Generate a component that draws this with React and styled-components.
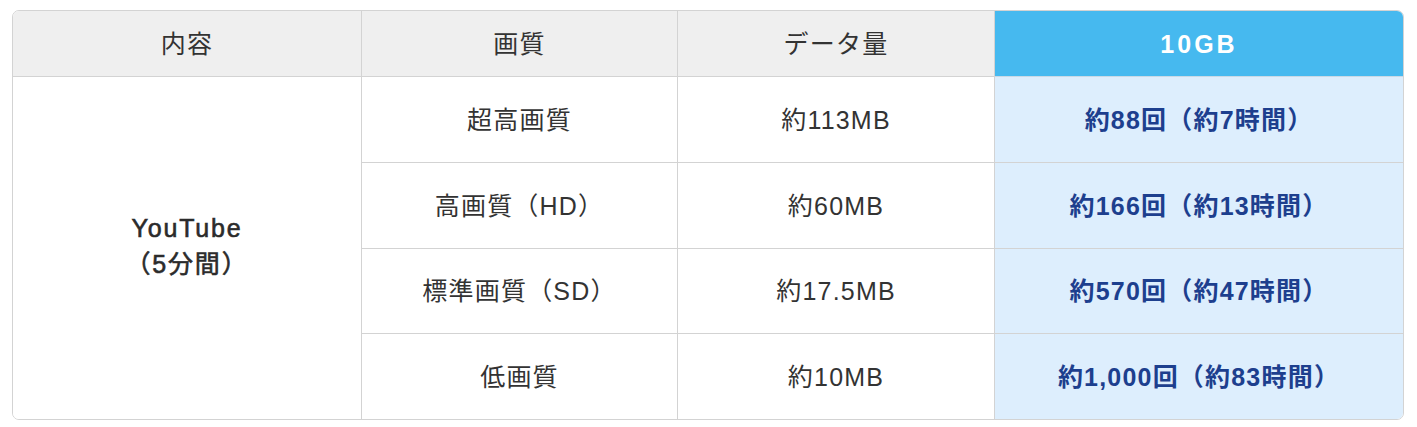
import React from "react";
import styled, { createGlobalStyle, css } from "styled-components";

const Global = createGlobalStyle`
  html, body { margin: 0; padding: 0; background: #ffffff; }
  body {
    font-family: "Liberation Sans", "Noto Sans CJK JP", sans-serif;
    color: #333333;
  }
`;

const Page = styled.div`
  padding: 10px 0 0 12px;
`;

const Table = styled.div`
  width: 1392px;
  box-sizing: border-box;
  border: 1px solid #d3d3d3;
  border-radius: 7px;
  overflow: hidden;
  display: grid;
  grid-template-columns: 349px 316px 317px 1fr;
  grid-template-rows: 66px 86px 86px 85px 85px;
`;

const variants = {
  head: css`
    background: #efefef;
    color: #333333;
    font-weight: 400;
  `,
  headAccent: css`
    background: #46b9ef;
    color: #ffffff;
    font-weight: 700;
    letter-spacing: 3px;
    border-bottom-color: #c9d9e6;
  `,
  body: css`
    background: #ffffff;
    color: #333333;
    font-weight: 400;
  `,
  label: css`
    background: #ffffff;
    color: #2b2b2b;
    font-weight: 400;
    -webkit-text-stroke: 0.6px #2b2b2b;
    letter-spacing: 1.8px;
    line-height: 36px;
    padding-bottom: 5px;
  `,
  accent: css`
    background: #ddeefd;
    color: #1d3f8e;
    font-weight: 700;
  `,
};

const Cell = styled.div`
  box-sizing: border-box;
  display: flex;
  flex-direction: column;
  align-items: center;
  justify-content: center;
  text-align: center;
  font-size: 25px;
  line-height: 34px;
  letter-spacing: 1.2px;
  border-right: ${(p) => (p.$lastCol ? "none" : "1px solid #d3d3d3")};
  border-bottom: ${(p) => (p.$lastRow ? "none" : "1px solid #d3d3d3")};
  ${(p) => p.$span && `grid-row: span ${p.$span};`}
  ${(p) => variants[p.$variant]}
`;

const Line = styled.span`
  display: block;
`;

const rows = [
  { quality: "超高画質", data: "約113MB", count: "約88回（約7時間）" },
  { quality: "高画質（HD）", data: "約60MB", count: "約166回（約13時間）" },
  { quality: "標準画質（SD）", data: "約17.5MB", count: "約570回（約47時間）" },
  { quality: "低画質", data: "約10MB", count: "約1,000回（約83時間）" },
];

export default function App() {
  return (
    <>
      <Global />
      <Page>
        <Table>
          <Cell $variant="head">内容</Cell>
          <Cell $variant="head">画質</Cell>
          <Cell $variant="head">データ量</Cell>
          <Cell $variant="headAccent" $lastCol>
            10GB
          </Cell>
          <Cell $variant="label" $span={4} $lastRow>
            <Line>YouTube</Line>
            <Line>（5分間）</Line>
          </Cell>
          {rows.map((r, i) => {
            const last = i === rows.length - 1;
            return (
              <React.Fragment key={r.quality}>
                <Cell $variant="body" $lastRow={last}>
                  {r.quality}
                </Cell>
                <Cell $variant="body" $lastRow={last}>
                  {r.data}
                </Cell>
                <Cell $variant="accent" $lastRow={last} $lastCol>
                  {r.count}
                </Cell>
              </React.Fragment>
            );
          })}
        </Table>
      </Page>
    </>
  );
}
